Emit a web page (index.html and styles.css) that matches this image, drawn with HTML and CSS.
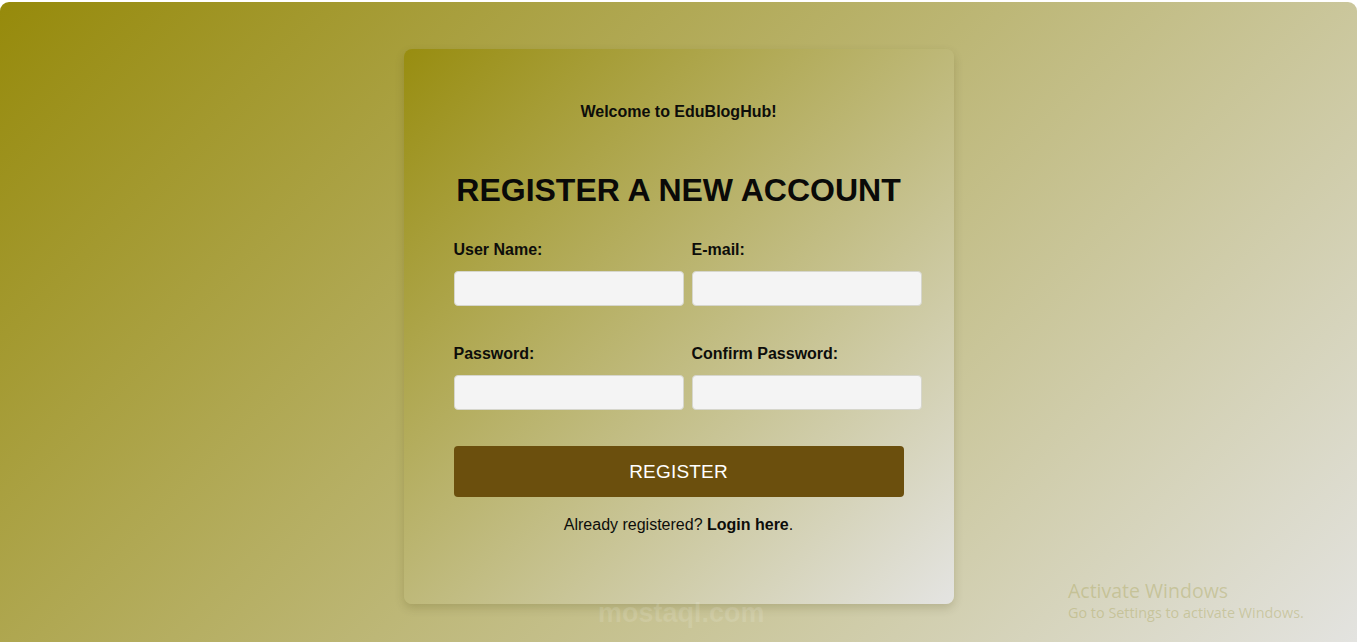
FILE: index.html
```html
<!DOCTYPE html>
<html lang="en">
<head>
<meta charset="utf-8">
<title>Register - EduBlogHub</title>
<link rel="stylesheet" href="styles.css">
</head>
<body>
<div class="page">
  <main class="card">
    <p class="welcome">Welcome to EduBlogHub!</p>
    <h1 class="title">REGISTER A NEW ACCOUNT</h1>
    <form class="form">
      <div class="grid">
        <div class="field">
          <label class="label" for="user">User Name:</label>
          <input class="input" id="user" type="text">
        </div>
        <div class="field">
          <label class="label" for="email">E-mail:</label>
          <input class="input" id="email" type="email">
        </div>
        <div class="field">
          <label class="label" for="pass">Password:</label>
          <input class="input" id="pass" type="password">
        </div>
        <div class="field">
          <label class="label" for="pass2">Confirm Password:</label>
          <input class="input" id="pass2" type="password">
        </div>
      </div>
      <button class="btn" type="button">REGISTER</button>
    </form>
    <p class="login">Already registered? <a class="login-link" href="#">Login here</a>.</p>
  </main>
  <div class="watermark">mostaql.com</div>
  <div class="activate">
    <div class="activate-title">Activate Windows</div>
    <div class="activate-sub">Go to Settings to activate Windows.</div>
  </div>
</div>
</body>
</html>
```
FILE: styles.css
```css
html, body {
  margin: 0;
  padding: 0;
  height: 100%;
  background: #ffffff;
  overflow: hidden;
}

.page {
  position: relative;
  margin: 2px 4px 0 0;
  height: calc(100vh - 2px);
  border-radius: 9px 9px 0 0;
  background: linear-gradient(135deg, #968a0b 0%, #e3e3e0 100%);
  font-family: "Liberation Sans", Arial, sans-serif;
  color: #000;
  display: flex;
  justify-content: center;
  align-items: flex-start;
  box-sizing: border-box;
  padding-top: 47px;
}

.card {
  width: 550px;
  height: 555px;
  box-sizing: border-box;
  padding: 54px 50px 0 50px;
  border-radius: 8px;
  background: linear-gradient(135deg, #988d10 0%, #e4e4e2 100%);
  box-shadow: 0 4px 10px rgba(60, 55, 0, 0.18);
  text-align: center;
}

.welcome {
  margin: 0;
  font-size: 16px;
  font-weight: bold;
  line-height: 18px;
  color: #0d0d0a;
}

.title {
  margin: 51px 0 0 0;
  font-size: 32px;
  line-height: 37px;
  font-weight: bold;
  color: #0a0a08;
}

.form {
  margin-top: 32px;
  text-align: left;
}

.grid {
  display: grid;
  grid-template-columns: 230px 230px;
  column-gap: 8px;
  row-gap: 39px;
}

.field {
  display: flex;
  flex-direction: column;
}

.label {
  font-size: 16px;
  font-weight: bold;
  line-height: 18px;
  color: #0d0d0a;
  margin-bottom: 12px;
}

.input {
  width: 230px;
  height: 35px;
  box-sizing: border-box;
  margin: 0;
  border: 1px solid #d6d6cc;
  border-radius: 4px;
  background: #f4f4f4;
  font-family: inherit;
  font-size: 15px;
}

.btn {
  display: block;
  width: 450px;
  height: 51px;
  margin-top: 36px;
  border: none;
  border-radius: 4px;
  background: #6b4f0d;
  color: #ffffff;
  font-family: "Liberation Sans", Arial, sans-serif;
  font-size: 19px;
  letter-spacing: 0.2px;
}

.login {
  margin: 19px 0 0 0;
  font-size: 16px;
  line-height: 18px;
  color: #0d0d0a;
}

.login-link {
  color: #0d0d0a;
  font-weight: bold;
  text-decoration: none;
}

.watermark {
  position: absolute;
  left: 598px;
  top: 596px;
  font-family: "Liberation Sans", Arial, sans-serif;
  font-size: 27px;
  font-weight: bold;
  color: rgba(255, 255, 255, 0.12);
}

.activate {
  position: absolute;
  left: 1068px;
  top: 576px;
  font-family: "Open Sans", "Noto Sans", sans-serif;
  color: rgba(175, 170, 100, 0.45);
}

.activate-title {
  font-size: 19.5px;
  line-height: 25px;
}

.activate-sub {
  font-size: 14.4px;
  line-height: 20px;
}
```
